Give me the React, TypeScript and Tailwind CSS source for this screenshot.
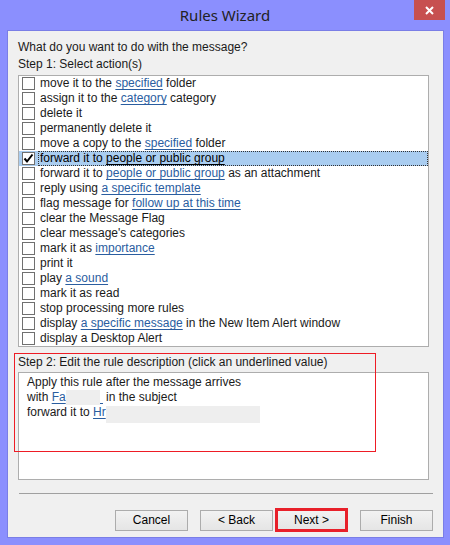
import React from "react";

const L = ({ children }: { children: React.ReactNode }) => (
  <span className="text-[#2a5d9f] underline underline-offset-[2px] decoration-[#2a5d9f]">{children}</span>
);

type Row = { parts: React.ReactNode; checked?: boolean };

const rows: Row[] = [
  { parts: <>move it to the <L>specified</L> folder</> },
  { parts: <>assign it to the <L>category</L> category</> },
  { parts: <>delete it</> },
  { parts: <>permanently delete it</> },
  { parts: <>move a copy to the <L>specified</L> folder</> },
  { parts: <>forward it to <span className="underline underline-offset-[2px]">people or public group</span></>, checked: true },
  { parts: <>forward it to <L>people or public group</L> as an attachment</> },
  { parts: <>reply using <L>a specific template</L></> },
  { parts: <>flag message for <L>follow up at this time</L></> },
  { parts: <>clear the Message Flag</> },
  { parts: <>clear message's categories</> },
  { parts: <>mark it as <L>importance</L></> },
  { parts: <>print it</> },
  { parts: <>play <L>a sound</L></> },
  { parts: <>mark it as read</> },
  { parts: <>stop processing more rules</> },
  { parts: <>display <L>a specific message</L> in the New Item Alert window</> },
  { parts: <>display a Desktop Alert</> },
];

function Checkbox({ checked }: { checked?: boolean }) {
  return (
    <div className="w-[13px] h-[13px] border border-[#707070] bg-white flex items-center justify-center shrink-0">
      {checked && (
        <svg width="11" height="11" viewBox="0 0 11 11">
          <path d="M1.5 5.5 L4 8.5 L9.5 1.5" stroke="#000" strokeWidth="2" fill="none" />
        </svg>
      )}
    </div>
  );
}

function Btn({ label, next }: { label: string; next?: boolean }) {
  return (
    <div
      className={
        "flex items-center justify-center text-[12px] text-black bg-gradient-to-b from-[#f2f2f2] to-[#e5e5e5] " +
        (next
          ? "w-[73px] h-[24px] border-[3px] border-[#e8202a]"
          : "w-[73px] h-[21px] border border-[#acacac]")
      }
    >
      {label}
    </div>
  );
}

export default function App() {
  return (
    <div
      className="w-[450px] h-[545px] bg-[#8b8ffe] flex flex-col text-[12px] leading-[15px] text-[#1a1a1a]"
      style={{ fontFamily: '"Liberation Sans", Arial, sans-serif' }}
    >
      <div className="relative h-[30px] flex items-center justify-center shrink-0">
        <span className="text-[15px] text-[#222] mt-[1px]" style={{ fontFamily: '"Noto Sans", sans-serif' }}>
          Rules Wizard
        </span>
        <div className="absolute right-[5px] top-0 w-[31px] h-[20px] bg-[#c75050] flex items-center justify-center">
          <svg width="9" height="9" viewBox="0 0 9 9">
            <path d="M1 1 L8 8 M8 1 L1 8" stroke="#fff" strokeWidth="2" />
          </svg>
        </div>
      </div>
      <div className="relative mx-[6px] ml-[7px] h-[508px] bg-[#f0f0f0] border border-[#7a7ee6] pt-[9px] pl-[10px] pr-[14px] flex flex-col">
        <div className="h-[15px]">What do you want to do with the message?</div>
        <div className="h-[15px] mt-[2px]">Step 1: Select action(s)</div>
        <div className="mt-[3px] h-[272px] border border-[#adadad] bg-white flex flex-col py-0">
          {rows.map((r, i) => (
            <div
              key={i}
              className={"h-[15px] flex items-center pl-[2px] shrink-0 " + (r.checked ? "bg-[#aacdf0]" : "")}
            >
              <div className="pl-[1px]">
                <Checkbox checked={r.checked} />
              </div>
              <div
                className={
                  "ml-[3px] h-[15px] flex items-center whitespace-nowrap grow pl-[1px] " +
                  (r.checked ? "border border-dotted border-[#333] text-black" : "border border-transparent")
                }
              >
                <span>{r.parts}</span>
              </div>
            </div>
          ))}
        </div>
        <div className="h-[15px] mt-[8px]">Step 2: Edit the rule description (click an underlined value)</div>
        <div className="mt-[2px] h-[108px] border border-[#adadad] bg-white pt-[2px] pl-[8px] flex flex-col">
          <div className="h-[15px]">Apply this rule after the message arrives</div>
          <div className="h-[15px] flex items-center whitespace-nowrap">
            <span>with&nbsp;</span>
            <L>Fa</L>
            <span className="inline-block w-[34px] h-[15px] bg-[#eeeeee]" />
            <span className="inline-block w-[3px] overflow-hidden text-[#2a5d9f] underline underline-offset-[2px]">
              &nbsp;
            </span>
            <span>&nbsp;in the subject</span>
          </div>
          <div className="h-[15px] flex items-center whitespace-nowrap">
            <span>forward it to&nbsp;</span>
            <L>Hr</L>
            <span className="inline-block w-[154px] h-[17px] bg-[#eeeeee] mt-[4px]" />
          </div>
        </div>
        <div className="mt-[13px] h-[1px] bg-[#a0a0a0] ml-[1px] mr-[-4px]" />
        <div className="mt-[14px] flex items-center justify-end mr-[-4px]">
          <Btn label="Cancel" />
          <div className="w-[12px]" />
          <Btn label="< Back" />
          <div className="w-[2px]" />
          <Btn label="Next >" next />
          <div className="w-[12px]" />
          <Btn label="Finish" />
        </div>
        <div className="absolute left-[6px] top-[322px] w-[362px] h-[99px] shadow-[inset_0_0_0_1px_#ee1c25] pointer-events-none" />
      </div>
    </div>
  );
}
